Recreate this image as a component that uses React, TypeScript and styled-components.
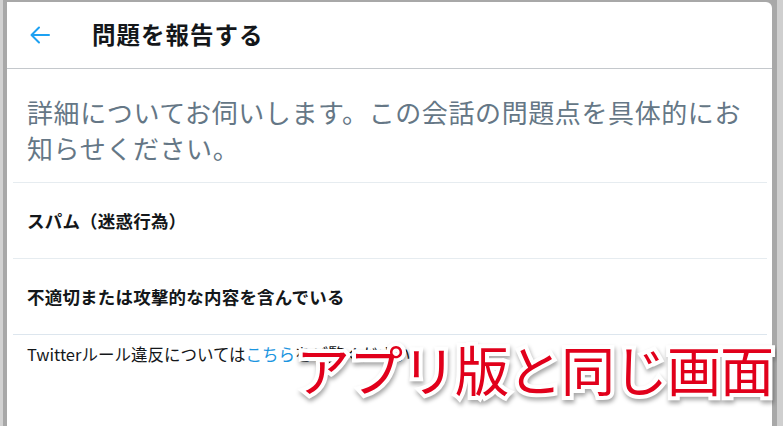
import { createGlobalStyle, styled } from "styled-components";

const GlobalStyle = createGlobalStyle`
  html, body {
    margin: 0;
    padding: 0;
    background: #a8a8a8;
    overflow: hidden;
  }
  body {
    font-family: "Noto Sans CJK JP", "Noto Sans", sans-serif;
  }
`;

const BackArrow = () => (
  <svg width="20" height="18" viewBox="0 0 20 18" fill="none">
    <path d="M19 9H2" stroke="#1da1f2" strokeWidth="2" strokeLinecap="round" />
    <path d="M9 1.5L1.5 9L9 16.5" stroke="#1da1f2" strokeWidth="2" strokeLinecap="round" strokeLinejoin="round" />
  </svg>
);

const App = () => {
  return (
    <Page>
      <GlobalStyle />
      <Modal>
        <Header>
          <IconButton>
            <BackArrow />
          </IconButton>
          <Title>問題を報告する</Title>
        </Header>
        <Lead>
          詳細についてお伺いします。この会話の問題点を具体的にお
          <br />
          知らせください。
        </Lead>
        <Divider />
        <Option>スパム（迷惑行為）</Option>
        <Divider />
        <Option>不適切または攻撃的な内容を含んでいる</Option>
        <Divider $tint />
        <Footer>
          Twitterルール違反については<Link>こちら</Link>をご覧ください。
        </Footer>
      </Modal>
      <Caption>アプリ版と同じ画面</Caption>
    </Page>
  );
};

export default App;

const Page = styled.div`
  position: relative;
  display: flex;
  height: 426px;
  box-sizing: border-box;
  padding-top: 2px;
  border-left: 3px solid #d2d2d2;
  border-right: 6px solid #cfcfcf;
  overflow: hidden;
`;

const Modal = styled.div`
  margin-left: 4px;
  width: 765px;
  height: 440px;
  background: #fff;
  border-top-right-radius: 6px;
  display: flex;
  flex-direction: column;
`;

const Header = styled.div`
  height: 66px;
  display: flex;
  align-items: center;
  border-bottom: 1px solid #c4c8cc;
  box-sizing: content-box;
`;

const IconButton = styled.div`
  width: 85px;
  padding-left: 23px;
  box-sizing: border-box;
  display: flex;
  align-items: center;
  height: 20px;
`;

const Title = styled.div`
  color: #14171a;
  font-size: 23.5px;
  font-weight: 700;
  letter-spacing: 1px;
  line-height: 1;
`;

const Lead = styled.div`
  padding: 25px 20px 16px;
  color: #657786;
  font-size: 26px;
  line-height: 36px;
  letter-spacing: 0.6px;
  white-space: nowrap;
`;

const Divider = styled.div<{ $tint?: boolean }>`
  height: 1px;
  margin: 0 5px 0 6px;
  background: ${(p) => (p.$tint ? "#dde6ee" : "#e6ecf0")};
`;

const Option = styled.div`
  height: 75px;
  display: flex;
  align-items: center;
  padding-left: 20px;
  color: #14171a;
  font-size: 17.5px;
  font-weight: 700;
  letter-spacing: 0.2px;
`;

const Footer = styled.div`
  padding: 8px 20px 0;
  color: #14171a;
  font-size: 16.5px;
  line-height: 22px;
`;

const Link = styled.span`
  color: #1b95e0;
`;

const Caption = styled.div`
  position: absolute;
  left: 293px;
  top: 337px;
  color: #e1001b;
  font-size: 54px;
  font-weight: 400;
  line-height: 1.2;
  letter-spacing: -1px;
  white-space: nowrap;
  -webkit-text-stroke: 8px #fff;
  paint-order: stroke fill;
  filter: drop-shadow(1px 3px 2px rgba(0, 0, 0, 0.35));
`;
